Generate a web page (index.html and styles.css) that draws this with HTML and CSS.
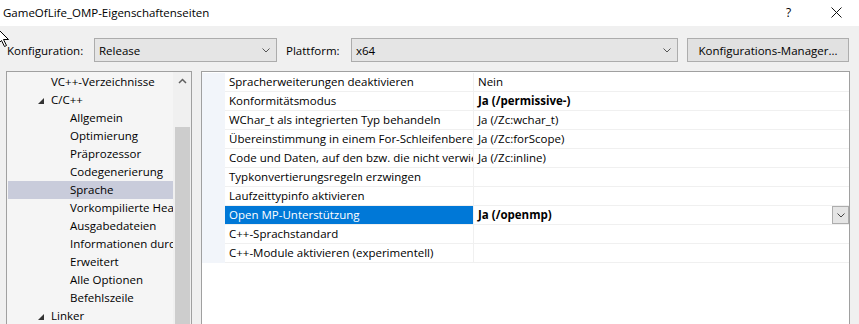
FILE: index.html
```html
<!DOCTYPE html>
<html lang="de">
<head>
    <meta charset="UTF-8">
    <title>GameOfLife_OMP-Eigenschaftenseiten</title>
    <link rel="stylesheet" href="styles.css">
</head>
<body>
    <div class="dialog">
        <div class="titlebar">
            <span class="title">GameOfLife_OMP-Eigenschaftenseiten</span>
            <span class="help">?</span>
            <span class="close">
                <svg width="11" height="11" viewBox="0 0 11 11"><path d="M0.5 0.5 L10.5 10.5 M10.5 0.5 L0.5 10.5" stroke="#111" stroke-width="1" fill="none"/></svg>
            </span>
        </div>

        <div class="toolbar">
            <span class="lbl lbl-config">Konfiguration:</span>
            <div class="combo combo-config">
                <span>Release</span>
                <svg class="chev" width="8" height="5" viewBox="0 0 8 5"><path d="M0.5 0.5 L4 4 L7.5 0.5" stroke="#555" fill="none"/></svg>
            </div>
            <span class="lbl lbl-platform">Plattform:</span>
            <div class="combo combo-platform">
                <span>x64</span>
                <svg class="chev" width="8" height="5" viewBox="0 0 8 5"><path d="M0.5 0.5 L4 4 L7.5 0.5" stroke="#555" fill="none"/></svg>
            </div>
            <button class="btn">Konfigurations-Manager...</button>
        </div>

        <div class="main">
            <div class="tree">
                <ul class="tree-list">
                    <li class="lvl1">VC++-Verzeichnisse</li>
                    <li class="lvl1"><svg class="tri" width="6" height="6" viewBox="0 0 6 6"><polygon points="0,6 6,6 6,0" fill="#333"/></svg>C/C++</li>
                    <li class="lvl2">Allgemein</li>
                    <li class="lvl2">Optimierung</li>
                    <li class="lvl2">Präprozessor</li>
                    <li class="lvl2">Codegenerierung</li>
                    <li class="lvl2 selected">Sprache</li>
                    <li class="lvl2">Vorkompilierte Header</li>
                    <li class="lvl2">Ausgabedateien</li>
                    <li class="lvl2">Informationen durchsuchen</li>
                    <li class="lvl2">Erweitert</li>
                    <li class="lvl2">Alle Optionen</li>
                    <li class="lvl2">Befehlszeile</li>
                    <li class="lvl1"><svg class="tri" width="6" height="6" viewBox="0 0 6 6"><polygon points="0,6 6,6 6,0" fill="#333"/></svg>Linker</li>
                </ul>
                <div class="scrollbar">
                    <div class="sb-up">
                        <svg width="9" height="6" viewBox="0 0 9 6"><path d="M1 5 L4.5 1.5 L8 5" stroke="#606060" stroke-width="1.5" fill="none"/></svg>
                    </div>
                    <div class="sb-thumb"></div>
                </div>
            </div>

            <div class="grid">
                <div class="row"><div class="margin"></div><div class="name">Spracherweiterungen deaktivieren</div><div class="value">Nein</div></div>
                <div class="row"><div class="margin"></div><div class="name">Konformitätsmodus</div><div class="value bold">Ja (/permissive-)</div></div>
                <div class="row"><div class="margin"></div><div class="name">WChar_t als integrierten Typ behandeln</div><div class="value">Ja (/Zc:wchar_t)</div></div>
                <div class="row"><div class="margin"></div><div class="name">Übereinstimmung in einem For-Schleifenbereich erzwingen</div><div class="value">Ja (/Zc:forScope)</div></div>
                <div class="row"><div class="margin"></div><div class="name">Code und Daten, auf den bzw. die nicht verwiesen wird, entfernen</div><div class="value">Ja (/Zc:inline)</div></div>
                <div class="row"><div class="margin"></div><div class="name">Typkonvertierungsregeln erzwingen</div><div class="value"></div></div>
                <div class="row"><div class="margin"></div><div class="name">Laufzeittypinfo aktivieren</div><div class="value"></div></div>
                <div class="row active">
                    <div class="margin"></div>
                    <div class="name">Open MP-Unterstützung</div>
                    <div class="value bold">
                        <span>Ja (/openmp)</span>
                        <span class="drop">
                            <svg width="8" height="5" viewBox="0 0 8 5"><path d="M0.5 0.5 L4 4 L7.5 0.5" stroke="#444" fill="none"/></svg>
                        </span>
                    </div>
                </div>
                <div class="row"><div class="margin"></div><div class="name">C++-Sprachstandard</div><div class="value"></div></div>
                <div class="row"><div class="margin"></div><div class="name">C++-Module aktivieren (experimentell)</div><div class="value"></div></div>
            </div>
        </div>

        <!-- mouse pointer -->
        <svg class="cursor" width="13" height="20" viewBox="0 0 13 20"><polygon points="0.5,0.5 0.5,16.5 4.5,12.5 7.5,18.5 9.5,17.5 6.5,11.5 11.5,11.5" fill="#fff" stroke="#000" stroke-width="1"/></svg>
    </div>
</body>
</html>
```

FILE: styles.css
```css
body {
    margin: 0;
    background-color: #f0f0f0;
    font-family: "Open Sans", "Noto Sans", sans-serif;
    font-size: 11.5px;
    color: #000;
    overflow: hidden;
}
.dialog {
    position: relative;
    width: 859px;
    height: 324px;
    overflow: hidden;
}

/* title bar */
.titlebar {
    height: 26px;
    background-color: #fff;
    display: flex;
    align-items: center;
    padding-left: 3px;
}
.title {
    flex: 1;
    padding-bottom: 1px;
}
.help {
    width: 12px;
    margin-right: 33px;
    font-size: 12px;
    padding-bottom: 2px;
}
.close {
    width: 11px;
    margin-right: 17px;
    display: flex;
    padding-bottom: 2px;
}

/* toolbar */
.toolbar {
    display: flex;
    align-items: center;
    margin-top: 12px;
    height: 24px;
    padding-left: 7px;
}
.lbl-config {
    width: 87px;
}
.lbl-platform {
    width: 65px;
    margin-left: 9px;
}
.combo {
    box-sizing: border-box;
    height: 24px;
    background-color: #e5e5e5;
    border: 1px solid #acacac;
    display: flex;
    align-items: center;
    justify-content: space-between;
    padding: 0 6px 0 4px;
}
.combo-config {
    width: 183px;
}
.combo-platform {
    width: 327px;
}
.chev {
    display: block;
}
.btn {
    box-sizing: border-box;
    width: 162px;
    height: 24px;
    margin-left: 9px;
    background-color: #e1e1e1;
    border: 1px solid #adadad;
    font-family: inherit;
    font-size: 11.5px;
    padding: 0;
}

/* main area */
.main {
    display: flex;
    margin-top: 9px;
    padding-left: 6px;
    gap: 9px;
    height: 260px;
}
.tree {
    box-sizing: border-box;
    width: 186px;
    border: 1px solid #a0a0a0;
    border-bottom: none;
    background-color: #f5f5f5;
    display: flex;
}
.tree-list {
    list-style: none;
    margin: 0;
    padding: 1px 0 0 1px;
    width: 166px;
    overflow: hidden;
}
.tree-list li {
    height: 18px;
    line-height: 18px;
    white-space: nowrap;
    overflow: hidden;
    position: relative;
}
.lvl1 {
    padding-left: 43px;
}
.lvl2 {
    padding-left: 62px;
}
.tree-list li.selected {
    background-color: #c9ccdb;
}
.tri {
    position: absolute;
    left: 30px;
    top: 7px;
}
.scrollbar {
    width: 18px;
    background-color: #f0f0f0;
    display: flex;
    flex-direction: column;
    align-items: center;
}
.sb-up {
    height: 18px;
    width: 100%;
    display: flex;
    align-items: center;
    justify-content: center;
}
.sb-thumb {
    margin-top: 37px;
    width: 15px;
    flex: 1;
    background-color: #cdcdcd;
}

/* property grid */
.grid {
    box-sizing: border-box;
    width: 649px;
    border: 1px solid #a0a0a0;
    border-bottom: none;
    background-color: #fff;
    padding-top: 1px;
}
.row {
    display: flex;
    height: 19px;
}
.row > div {
    box-sizing: border-box;
    height: 19px;
    line-height: 18px;
    white-space: nowrap;
    overflow: hidden;
}
.margin {
    width: 23px;
    background-color: #f2f5fa;
}
.name {
    width: 249px;
    padding-left: 4px;
    border-right: 1px solid #f0f0f0;
    border-bottom: 1px solid #f0f0f0;
}
.value {
    flex: 1;
    padding-left: 4px;
    border-bottom: 1px solid #f0f0f0;
}
.bold {
    font-weight: bold;
}
.active .name {
    background-color: #0078d7;
    color: #fff;
}
.active .value {
    display: flex;
    justify-content: space-between;
}
.drop {
    box-sizing: border-box;
    width: 17px;
    height: 18px;
    background-color: #e5e5e5;
    border: 1px solid #adadad;
    display: flex;
    align-items: center;
    justify-content: center;
}

.cursor {
    position: absolute;
    left: -3px;
    top: 28px;
}
```
